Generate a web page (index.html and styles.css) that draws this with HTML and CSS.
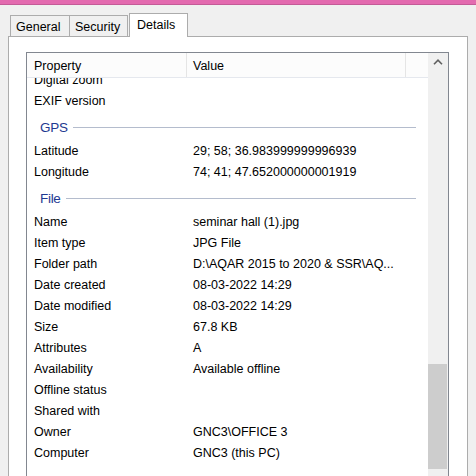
FILE: index.html
```html
<!DOCTYPE html>
<html>
<head>
<meta charset="utf-8">
<link rel="stylesheet" href="styles.css">
</head>
<body>
<div class="titlebar"></div>
<div class="tabs">
  <div class="tab">General</div>
  <div class="tab tab-mid">Security</div>
  <div class="tab tab-active">Details</div>
</div>
<div class="panel">
  <div class="list">
    <div class="content">
      <div class="header">
        <div class="hcell hprop">Property</div>
        <div class="hcell hval">Value</div>
        <div class="hcell hrest"></div>
      </div>
      <div class="viewport">
        <div class="rows">
          <div class="row"><span class="prop">Digital zoom</span><span class="val"></span></div>
          <div class="row"><span class="prop">EXIF version</span><span class="val"></span></div>
          <div class="group"><span class="gtitle">GPS</span><span class="gline"></span></div>
          <div class="row"><span class="prop">Latitude</span><span class="val">29; 58; 36.983999999996939</span></div>
          <div class="row"><span class="prop">Longitude</span><span class="val">74; 41; 47.652000000001919</span></div>
          <div class="group"><span class="gtitle">File</span><span class="gline"></span></div>
          <div class="row"><span class="prop">Name</span><span class="val">seminar hall (1).jpg</span></div>
          <div class="row"><span class="prop">Item type</span><span class="val">JPG File</span></div>
          <div class="row"><span class="prop">Folder path</span><span class="val">D:\AQAR 2015 to 2020 &amp; SSR\AQ...</span></div>
          <div class="row"><span class="prop">Date created</span><span class="val">08-03-2022 14:29</span></div>
          <div class="row"><span class="prop">Date modified</span><span class="val">08-03-2022 14:29</span></div>
          <div class="row"><span class="prop">Size</span><span class="val">67.8 KB</span></div>
          <div class="row"><span class="prop">Attributes</span><span class="val">A</span></div>
          <div class="row"><span class="prop">Availability</span><span class="val">Available offline</span></div>
          <div class="row"><span class="prop">Offline status</span><span class="val"></span></div>
          <div class="row"><span class="prop">Shared with</span><span class="val"></span></div>
          <div class="row"><span class="prop">Owner</span><span class="val">GNC3\OFFICE 3</span></div>
          <div class="row"><span class="prop">Computer</span><span class="val">GNC3 (this PC)</span></div>
          <div class="row"><span class="prop"></span><span class="val"></span></div>
        </div>
      </div>
    </div>
    <div class="scrollbar">
      <div class="sb-btn">
        <svg width="10" height="6" viewBox="0 0 10 6"><path d="M1 5.2 L5 1.2 L9 5.2" fill="none" stroke="#606060" stroke-width="1.6"/></svg>
      </div>
      <div class="thumb"></div>
    </div>
  </div>
</div>
</body>
</html>
```
FILE: styles.css
```css
* { box-sizing: border-box; }
html, body {
  margin: 0;
  padding: 0;
  height: 476px;
  overflow: hidden;
  background: #f0f0f0;
  font-family: "Liberation Sans", Arial, sans-serif;
  font-size: 12.5px;
  color: #000;
}
.titlebar {
  height: 5px;
  background: #e36aaf;
  border-bottom: 1px solid #c45a97;
}
.tabs {
  display: flex;
  align-items: flex-end;
  height: 23px;
  margin-top: 8px;
  padding-left: 10px;
  position: relative;
  z-index: 2;
}
.tab {
  width: 60px;
  height: 21px;
  border: 1px solid #acacac;
  border-bottom: none;
  background: #f0f0f0;
  padding: 1px 0 0 5px;
  line-height: 20px;
}
.tab-mid {
  margin-left: -1px;
  width: 59px;
}
.tab-active {
  margin-left: 1px;
  width: 59px;
  height: 24px;
  margin-bottom: -1px;
  background: #fff;
  padding: 1px 0 0 7px;
  line-height: 20px;
}
.panel {
  margin-left: 8px;
  width: 460px;
  height: 460px;
  border: 1px solid #acacac;
  background: #fff;
  padding: 15px 0 0 17px;
}
.list {
  display: flex;
  width: 423px;
  height: 440px;
  border: 1px solid #828790;
}
.content {
  width: 401px;
  display: flex;
  flex-direction: column;
}
.header {
  display: flex;
  height: 25px;
  background: #fcfcfc;
  border-bottom: 1px solid #e5e8ee;
}
.hcell {
  padding-top: 2px;
  line-height: 22px;
}
.hprop {
  width: 160px;
  padding-left: 7px;
  border-right: 1px solid #e5e5e5;
}
.hval {
  width: 219px;
  padding-left: 6px;
  border-right: 1px solid #e5e5e5;
}
.hrest { flex: 1; }
.viewport {
  flex: 1;
  overflow: hidden;
}
.rows {
  margin-top: -8px;
}
.row {
  display: flex;
  height: 21px;
  line-height: 21px;
}
.prop {
  width: 160px;
  padding-left: 7px;
}
.val {
  padding-left: 6px;
  white-space: nowrap;
}
.group {
  display: flex;
  align-items: center;
  height: 29px;
  padding: 1px 12px 0 13px;
}
.gtitle {
  font-size: 13.5px;
  color: #1e3991;
  letter-spacing: -0.3px;
}
.gline {
  flex: 1;
  height: 1px;
  background: #b4bccd;
  margin-left: 5px;
}
.scrollbar {
  width: 20px;
  background: #f0f0f0;
  display: flex;
  flex-direction: column;
}
.sb-btn {
  height: 17px;
  display: flex;
  align-items: center;
  justify-content: center;
}
.thumb {
  margin-top: 294px;
  width: 19px;
  height: 105px;
  background: #cdcdcd;
}
```
